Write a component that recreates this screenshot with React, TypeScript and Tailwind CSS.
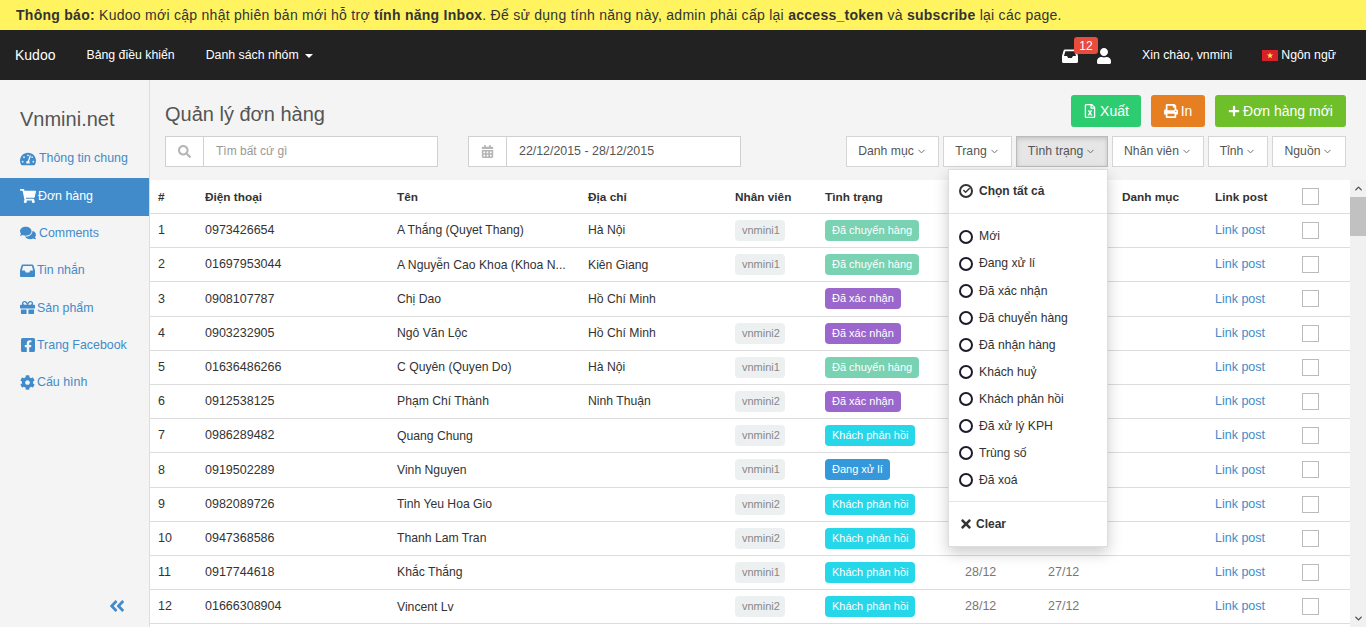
import {
  FaAngleDoubleLeft,
  FaCalendarAlt,
  FaCheck,
  FaCog,
  FaComments,
  FaFacebookSquare,
  FaGift,
  FaPlus,
  FaPrint,
  FaRegFileExcel,
  FaSearch,
  FaShoppingCart,
  FaTachometerAlt,
  FaTimes,
  FaUser,
} from 'react-icons/fa';
import { ChevronDown, ChevronUp } from 'lucide-react';

const statusStyles: Record<string, string> = {
  'Đã chuyển hàng': 'bg-[#79d2b1]',
  'Đã xác nhận': 'bg-[#9b67cc]',
  'Khách phản hồi': 'bg-[#26d6e9]',
  'Đang xử lí': 'bg-[#3498db]',
};

const orders = [
  ['1', '0973426654', 'A Thắng (Quyet Thang)', 'Hà Nội', 'vnmini1', 'Đã chuyển hàng'],
  ['2', '01697953044', 'A Nguyễn Cao Khoa (Khoa N...', 'Kiên Giang', 'vnmini1', 'Đã chuyển hàng'],
  ['3', '0908107787', 'Chị Dao', 'Hồ Chí Minh', '', 'Đã xác nhận'],
  ['4', '0903232905', 'Ngô Văn Lộc', 'Hồ Chí Minh', 'vnmini2', 'Đã xác nhận'],
  ['5', '01636486266', 'C Quyên (Quyen Do)', 'Hà Nội', 'vnmini1', 'Đã chuyển hàng'],
  ['6', '0912538125', 'Phạm Chí Thành', 'Ninh Thuận', 'vnmini2', 'Đã xác nhận'],
  ['7', '0986289482', 'Quang Chung', '', 'vnmini2', 'Khách phản hồi'],
  ['8', '0919502289', 'Vinh Nguyen', '', 'vnmini1', 'Đang xử lí'],
  ['9', '0982089726', 'Tinh Yeu Hoa Gio', '', 'vnmini2', 'Khách phản hồi'],
  ['10', '0947368586', 'Thanh Lam Tran', '', 'vnmini2', 'Khách phản hồi'],
  ['11', '0917744618', 'Khắc Thắng', '', 'vnmini1', 'Khách phản hồi', '28/12', '27/12'],
  ['12', '01666308904', 'Vincent Lv', '', 'vnmini2', 'Khách phản hồi', '28/12', '27/12'],
];

// same shape as the tray icon in font awesome 4, the react-icons one is too flat
function InboxIcon({ size = 15 }: { size?: number }) {
  return (
    <svg width={size} height={(size * 14) / 16} viewBox="0 0 16 14" fill="currentColor" className="shrink-0">
      <path
        fillRule="evenodd"
        d="M3 .5h10q1 0 1.4 1L16 7v5.5q0 1.5-1.5 1.5h-13Q0 14 0 12.5V7l1.6-5.5Q2 .5 3 .5zM3.3 2.2 2 7h3l1.2 2h3.6L11 7h3l-1.3-4.8z"
      />
    </svg>
  );
}

const sideLinks = [
  { label: 'Thông tin chung', icon: FaTachometerAlt, size: 16, gap: 'gap-[3px]' },
  { label: 'Đơn hàng', icon: FaShoppingCart, size: 16, gap: 'gap-[2px]', active: true },
  { label: 'Comments', icon: FaComments, size: 16, gap: 'gap-[3px]' },
  { label: 'Tin nhắn', icon: InboxIcon, size: 15, gap: 'gap-[2px]' },
  { label: 'Sản phẩm', icon: FaGift, size: 15, gap: 'gap-[2px]' },
  { label: 'Trang Facebook', icon: FaFacebookSquare, size: 16, gap: 'gap-[1px]' },
  { label: 'Cấu hình', icon: FaCog, size: 15, gap: 'gap-[2px]' },
];

const filters = [
  { label: 'Danh mục', width: 'w-[93px]' },
  { label: 'Trang', width: 'w-[69px]' },
  { label: 'Tình trạng', width: 'w-[92px]' },
  { label: 'Nhân viên', width: 'w-[92px]' },
  { label: 'Tỉnh', width: 'w-[60px]' },
  { label: 'Nguồn', width: 'w-[74px]' },
];

const statusOptions = [
  'Mới',
  'Đang xử lí',
  'Đã xác nhận',
  'Đã chuyển hàng',
  'Đã nhận hàng',
  'Khách huỷ',
  'Khách phản hồi',
  'Đã xử lý KPH',
  'Trùng số',
  'Đã xoá',
];

const headers = ['#', 'Điện thoại', 'Tên', 'Địa chỉ', 'Nhân viên', 'Tình trạng', '', '', 'Danh mục', 'Link post'];

function Checkbox() {
  return <span className="block h-[17px] w-[17px] border border-[#bbb] bg-white" />;
}

function VietnamFlag() {
  return (
    <svg width="16" height="11" viewBox="0 0 16 11" className="shrink-0">
      <rect width="16" height="11" fill="#d8202a" />
      <path d="M8 2.2l.8 2.3h2.4l-1.9 1.5.7 2.3L8 6.9 6 8.3l.7-2.3-1.9-1.5h2.4z" fill="#ffe14a" />
    </svg>
  );
}

function FilterButton({ label, width }: { label: string; width: string }) {
  const active = label === 'Tình trạng';
  return (
    <button
      className={`flex h-[31px] items-center justify-center gap-[2px] border text-[12.2px] text-[#555] ${width} ${
        active
          ? 'border-[#bbb] bg-[#e6e6e6] shadow-[inset_0_2px_4px_rgba(0,0,0,0.15)]'
          : 'border-[#d5d5d5] bg-white'
      }`}
    >
      {label}
      <ChevronDown size={11} strokeWidth={2} className="text-[#666]" />
    </button>
  );
}

function StatusMenu() {
  return (
    <div className="absolute left-[798px] top-[89px] z-10 w-[160px] border border-[#ddd] bg-white text-[12.2px] text-[#333] shadow-[0_6px_14px_rgba(0,0,0,0.2)]">
      <div className="flex h-[44px] items-center gap-[6px] border-b border-[#e5e5e5] pb-[2px] pl-[10px] text-[12px] font-bold">
        <span className="flex h-[14px] w-[14px] items-center justify-center rounded-full border-2 border-[#333]">
          <FaCheck size={7} />
        </span>
        Chọn tất cả
      </div>
      <div className="flex flex-col pb-[7px] pt-[9px]">
        {statusOptions.map((option) => (
          <div key={option} className="flex h-[27.1px] items-center gap-[6px] pl-[10px]">
            <span className="block h-[14px] w-[14px] rounded-full border-2 border-[#1b1b2b]" />
            {option}
          </div>
        ))}
      </div>
      <div className="flex h-[45px] items-center gap-[3px] border-t border-[#e5e5e5] pl-[10px] text-[12px] font-bold">
        <FaTimes size={14} className="text-[#333]" />
        Clear
      </div>
    </div>
  );
}

export default function App() {
  return (
    <div className="flex h-[627px] flex-col overflow-hidden bg-[#f4f4f4] text-[12.5px] text-[#333] [font-family:'Liberation_Sans',Arial,sans-serif]">
      <div className="flex h-[30px] shrink-0 items-center bg-[#fff35f] pl-4 text-[14px] tracking-[0.27px]">
        <span>
          <b>Thông báo:</b> Kudoo mới cập nhật phiên bản mới hỗ trợ <b>tính năng Inbox</b>. Để sử dụng tính năng này, admin phải cấp lại <b>access_token</b> và <b>subscribe</b> lại các page.
        </span>
      </div>

      <nav className="flex h-[50px] shrink-0 items-center bg-[#222] text-[12.3px] text-white">
        <span className="ml-[15px] text-[14px]">Kudoo</span>
        <a className="ml-[31px]">Bảng điều khiển</a>
        <a className="ml-[31px] flex items-center gap-[6px]">
          Danh sách nhóm
          <span className="mt-[2px] border-x-4 border-t-4 border-x-transparent border-t-white" />
        </a>
        <div className="relative ml-auto mt-[2px] flex items-center">
          <InboxIcon size={16} />
          <span className="absolute left-[12px] top-[-11px] flex h-[17px] w-[24px] items-center justify-center rounded-[3px] bg-[#e74c3c] text-[12px]">12</span>
          <FaUser size={16} className="ml-[18px]" />
        </div>
        <span className="ml-[30px]">Xin chào, vnmini</span>
        <span className="ml-[30px] mr-[30px] flex items-center gap-[3px]">
          <VietnamFlag />
          Ngôn ngữ
        </span>
      </nav>

      <div className="flex min-h-0 flex-1">
        <aside className="flex w-[150px] shrink-0 flex-col border-r border-[#ddd] bg-[#f4f4f4] pt-[26px] text-[12.4px]">
          <h2 className="mb-[9px] pl-5 text-[20px] leading-[26px] text-[#555]">Vnmini.net</h2>
          {sideLinks.map(({ label, icon: Icon, size, gap, active }) => (
            <a
              key={label}
              className={`flex h-[37.3px] items-center pb-[2px] pl-5 ${gap} ${active ? 'bg-[#428bca] text-white' : 'text-[#428bca]'}`}
            >
              <Icon size={size} />
              {label}
            </a>
          ))}
          <div className="mt-auto flex justify-end pb-[12px] pr-[23px] text-[#428bca]">
            <FaAngleDoubleLeft size={18} />
          </div>
        </aside>

        <main className="relative flex min-w-0 flex-1 flex-col">
          <div className="flex h-[100px] shrink-0 flex-col pl-[15px] pr-[20px]">
            <div className="flex h-[56px] items-start justify-between pt-[15px]">
              <h1 className="mt-[5px] text-[20px] leading-[28px] text-[#555]">Quản lý đơn hàng</h1>
              <div className="flex gap-[10px] text-[14px] text-white">
                <button className="flex h-[32px] w-[70px] items-center justify-center gap-[3px] rounded-[3px] bg-[#2ecc71]">
                  <FaRegFileExcel size={14} />
                  Xuất
                </button>
                <button className="flex h-[32px] w-[54px] items-center justify-center gap-[3px] rounded-[3px] bg-[#e67e22]">
                  <FaPrint size={14} />
                  In
                </button>
                <button className="flex h-[32px] w-[131px] items-center justify-center gap-[3px] rounded-[3px] bg-[#6fbf2a]">
                  <FaPlus size={12} />
                  Đơn hàng mới
                </button>
              </div>
            </div>
            <div className="flex items-center justify-between">
              <div className="flex gap-[30px]">
                <div className="flex h-[31px] w-[273px] border border-[#d0d0d0] bg-white">
                  <span className="flex w-[38px] items-center justify-center border-r border-[#d0d0d0] text-[#b5b5b5]">
                    <FaSearch size={13} />
                  </span>
                  <span className="pl-3 text-[12px] leading-[29px] text-[#999]">Tìm bất cứ gì</span>
                </div>
                <div className="flex h-[31px] w-[273px] border border-[#d0d0d0] bg-white">
                  <span className="flex w-[38px] items-center justify-center border-r border-[#d0d0d0] text-[#b5b5b5]">
                    <FaCalendarAlt size={13} />
                  </span>
                  <span className="pl-3 text-[12.4px] leading-[29px] text-[#555]">22/12/2015 - 28/12/2015</span>
                </div>
              </div>
              <div className="flex gap-[4px]">
                {filters.map(({ label, width }) => (
                  <FilterButton key={label} label={label} width={width} />
                ))}
              </div>
            </div>
          </div>

          <div className="flex min-h-0 flex-1">
            <div className="min-w-0 flex-1 overflow-hidden bg-white">
              <table className="w-full table-fixed border-collapse text-left">
                <colgroup>
                  <col className="w-[47px]" />
                  <col className="w-[192px]" />
                  <col className="w-[191px]" />
                  <col className="w-[147px]" />
                  <col className="w-[90px]" />
                  <col className="w-[140px]" />
                  <col className="w-[83px]" />
                  <col className="w-[74px]" />
                  <col className="w-[93px]" />
                  <col className="w-[87px]" />
                  <col />
                </colgroup>
                <thead>
                  <tr className="h-[33.5px] border-b border-[#ddd] text-[11.8px]">
                    {headers.map((title, index) => (
                      <th key={index} className="px-2 pt-[2px] font-bold">{title}</th>
                    ))}
                    <th className="px-2"><Checkbox /></th>
                  </tr>
                </thead>
                <tbody>
                  {orders.map(([id, phone, name, city, staff, status, created, updated]) => (
                    <tr key={id} className="h-[34.2px] border-b border-[#ddd]">
                      <td className="px-2">{id}</td>
                      <td className="px-2">{phone}</td>
                      <td className="truncate px-2 text-[12.2px]">{name}</td>
                      <td className="px-2 text-[12.2px]">{city}</td>
                      <td className="px-2">
                        {staff && <span className="inline-block h-[21px] rounded-[4px] bg-[#ecf0f1] pl-[7px] pr-[5px] text-[11px] leading-[21px] text-[#888]">{staff}</span>}
                      </td>
                      <td className="px-2">
                        {status && <span className={`inline-block h-[21px] rounded-[4px] px-[7px] text-[11px] leading-[21px] text-white ${statusStyles[status]}`}>{status}</span>}
                      </td>
                      <td className="px-2 text-[#777]">{created}</td>
                      <td className="px-2 text-[#777]">{updated}</td>
                      <td className="px-2" />
                      <td className="px-2 text-[#428bca]">Link post</td>
                      <td className="px-2"><Checkbox /></td>
                    </tr>
                  ))}
                </tbody>
              </table>
            </div>

            <div className="flex w-[16px] shrink-0 flex-col bg-[#f1f1f1] text-[#505050]">
              <span className="flex h-[17px] items-center justify-center">
                <ChevronUp size={11} strokeWidth={3} />
              </span>
              <span className="h-[39px] bg-[#c1c1c1]" />
              <span className="mt-auto flex h-[17px] items-center justify-center">
                <ChevronDown size={11} strokeWidth={3} />
              </span>
            </div>
          </div>

          <StatusMenu />
        </main>
      </div>
    </div>
  );
}
